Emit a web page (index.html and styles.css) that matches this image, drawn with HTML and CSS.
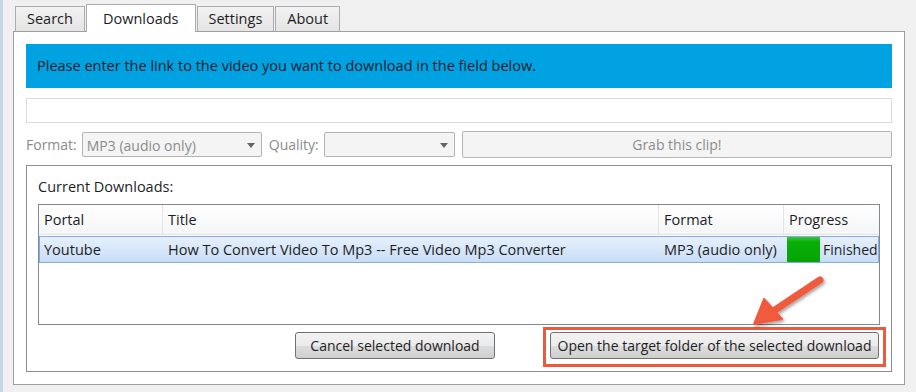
FILE: index.html
```html
<!DOCTYPE html>
<html lang="en">
<head>
    <meta charset="UTF-8">
    <meta name="viewport" content="width=device-width, initial-scale=1.0">
    <title>Video Downloader</title>
    <link rel="stylesheet" href="styles.css">
</head>
<body>

<div class="window">
    <!-- Tab strip -->
    <div class="tabs">
        <div class="tab">Search</div>
        <div class="tab active">Downloads</div>
        <div class="tab">Settings</div>
        <div class="tab">About</div>
    </div>

    <div class="panel">
        <div class="banner">Please enter the link to the video you want to download in the field below.</div>

        <input type="text" class="url-field">

        <div class="options">
            <span class="label">Format:</span>
            <div class="select format-select">MP3 (audio only)<span class="caret"></span></div>
            <span class="label">Quality:</span>
            <div class="select quality-select"><span class="caret"></span></div>
            <div class="grab-btn">Grab this clip!</div>
        </div>

        <!-- Current downloads group -->
        <div class="group">
            <div class="group-title">Current Downloads:</div>
            <div class="list">
                <div class="list-row list-head">
                    <div class="cell">Portal</div>
                    <div class="cell">Title</div>
                    <div class="cell">Format</div>
                    <div class="cell">Progress</div>
                </div>
                <div class="list-row list-item selected">
                    <div class="cell">Youtube</div>
                    <div class="cell">How To Convert Video To Mp3 -- Free Video Mp3 Converter</div>
                    <div class="cell">MP3 (audio only)</div>
                    <div class="cell progress"><span class="bar"></span>Finished</div>
                </div>
            </div>
            <div class="actions">
                <div class="btn cancel-btn">Cancel selected download</div>
                <div class="btn open-btn">Open the target folder of the selected download</div>
            </div>
        </div>
    </div>

    <!-- Annotation overlay -->
    <div class="highlight"></div>
    <svg class="arrow" width="90" height="60" viewBox="0 0 90 60">
        <defs>
            <filter id="shadow" x="-20%" y="-20%" width="150%" height="150%">
                <feDropShadow dx="1.5" dy="2" stdDeviation="1.5" flood-color="#000" flood-opacity="0.35"/>
            </filter>
        </defs>
        <g filter="url(#shadow)" fill="#f05a3c" stroke="#f05a3c">
            <line x1="72" y1="8" x2="24" y2="40" stroke-width="7" stroke-linecap="round"/>
            <polygon points="6,52 16,27 34,47" stroke-width="2" stroke-linejoin="round"/>
        </g>
    </svg>
</div>

</body>
</html>
```

FILE: styles.css
```css
body {
    margin: 0;
    background-color: #f0f0f0;
    font-family: "Open Sans", "Noto Sans", Arial, sans-serif;
    font-size: 14.5px;
    color: #1e1e1e;
}

.window {
    position: relative;
    width: 916px;
    height: 392px;
    border-left: 3px solid #c6d6e8;
    box-sizing: border-box;
    padding-top: 4px;
}

/* Tabs */
.tabs {
    display: flex;
    align-items: flex-end;
    padding-left: 12px;
    height: 27px;
    font-size: 14.5px;
}

.tab {
    height: 24px;
    line-height: 24px;
    padding: 0 11px;
    border: 1px solid #acacac;
    border-bottom: none;
    background: linear-gradient(#f2f2f2, #e4e4e4);
    margin-right: 1px;
}

.tab.active {
    height: 27px;
    line-height: 27px;
    padding: 0 16px;
    background: #fff;
    margin-bottom: -1px;
    position: relative;
    z-index: 1;
}

/* Panel */
.panel {
    margin-left: 10px;
    width: 892px;
    height: 354px;
    box-sizing: border-box;
    border: 1px solid #9e9e9e;
    background: #fff;
    padding: 12px 12px 0 12px;
}

.banner {
    height: 44px;
    line-height: 44px;
    background-color: #00a2e1;
    padding-left: 11px;
    color: #14202e;
}

.url-field {
    display: block;
    width: 100%;
    height: 25px;
    margin-top: 10px;
    box-sizing: border-box;
    border: 1px solid #dcdcdc;
    background: #fff;
}

.options {
    display: flex;
    align-items: center;
    margin-top: 8px;
    height: 27px;
    font-size: 14px;
}

.label {
    color: #8c8a88;
    margin-right: 5px;
}

.select {
    position: relative;
    height: 25px;
    line-height: 25px;
    box-sizing: border-box;
    border: 1px solid #b4b4b4;
    border-radius: 2px;
    background: #f4f4f4;
    color: #8c8c8c;
    padding-left: 4px;
    margin-right: 7px;
}

.format-select {
    width: 180px;
}

.quality-select {
    width: 131px;
}

.caret {
    position: absolute;
    right: 6px;
    top: 10px;
    border-left: 4px solid transparent;
    border-right: 4px solid transparent;
    border-top: 5px solid #666;
}

.grab-btn {
    flex: 1;
    height: 27px;
    line-height: 25px;
    box-sizing: border-box;
    border: 1px solid #b4b4b4;
    border-radius: 2px;
    background: #f4f4f4;
    color: #8c8c8c;
    text-align: center;
}

/* Group box */
.group {
    margin-top: 7px;
    height: 207px;
    box-sizing: border-box;
    border: 1px solid #8e8e8e;
    padding: 10px 11px 0 11px;
}

.group-title {
    height: 28px;
    line-height: 22px;
}

.list {
    height: 121px;
    box-sizing: border-box;
    border: 1px solid #828790;
}

.list-row {
    display: grid;
    grid-template-columns: 124px 496px 125px 1fr;
}

.list-head {
    height: 29px;
    line-height: 29px;
    background: linear-gradient(#fff, #f4f5f7);
    border-bottom: 1px solid #e2e3ea;
}

.list-head .cell {
    padding-left: 5px;
    border-right: 1px solid #e4e5ea;
}

.list-head .cell:last-child {
    border-right: none;
}

.list-item {
    height: 27px;
    line-height: 27px;
    margin-top: 1px;
}

.list-item .cell {
    padding-left: 4px;
    white-space: nowrap;
}

.list-item.selected {
    background: linear-gradient(#e6f0fc, #c8ddf6);
    border: 1px solid #86abdc;
    height: 25px;
    line-height: 25px;
}

.progress {
    display: flex;
    align-items: center;
    padding-left: 2px !important;
    font-size: 14px;
}

.bar {
    width: 33px;
    height: 25px;
    background: linear-gradient(#3ec43e, #06b006 20%, #06a406);
    margin-right: 3px;
}

.actions {
    display: flex;
    justify-content: flex-end;
    gap: 55px;
    margin-top: 7px;
    padding-right: 1px;
}

.btn {
    height: 27px;
    line-height: 25px;
    box-sizing: border-box;
    border: 1px solid #707070;
    border-radius: 3px;
    background: linear-gradient(#f3f3f3, #ebebeb 50%, #dddddd 51%, #cfcfcf);
    text-align: center;
    font-size: 14px;
}

.cancel-btn {
    width: 200px;
}

.open-btn {
    width: 329px;
}

/* Annotation */
.highlight {
    position: absolute;
    left: 540px;
    top: 327px;
    width: 343px;
    height: 40px;
    box-sizing: border-box;
    border: 3px solid #ec5a3e;
}

.arrow {
    position: absolute;
    left: 745px;
    top: 272px;
}
```
